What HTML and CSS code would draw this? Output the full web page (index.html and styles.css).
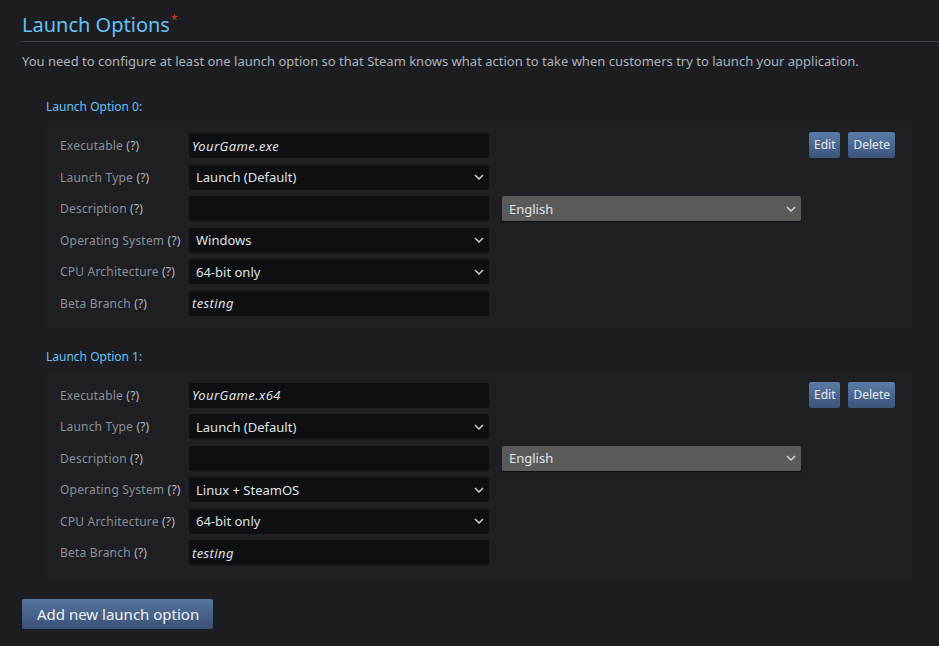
FILE: index.html
```html
<!DOCTYPE html>
<html>
<head>
<meta charset="utf-8">
<link rel="stylesheet" href="styles.css">
</head>
<body>
<div class="page">
  <h2 class="title">Launch Options<span class="req">*</span></h2>
  <p class="intro">You need to configure at least one launch option so that Steam knows what action to take when customers try to launch your application.</p>

  <div class="option">
    <div class="option-head">Launch Option 0:</div>
    <div class="panel">
      <div class="row">
        <div class="label">Executable <span class="q">(?)</span></div>
        <div class="field"><span class="it">YourGame.exe</span></div>
        <div class="actions"><span class="btn">Edit</span><span class="btn">Delete</span></div>
      </div>
      <div class="row">
        <div class="label">Launch Type <span class="q">(?)</span></div>
        <div class="field sel"><span>Launch (Default)</span><svg class="chev" width="10" height="6" viewBox="0 0 10 6"><path d="M1 1 L5 5 L9 1" fill="none" stroke="#c9cbcd" stroke-width="1.5"/></svg></div>
      </div>
      <div class="row">
        <div class="label">Description <span class="q">(?)</span></div>
        <div class="field"></div>
        <div class="lang"><span>English</span><svg class="chev" width="10" height="6" viewBox="0 0 10 6"><path d="M1 1 L5 5 L9 1" fill="none" stroke="#d6d6d6" stroke-width="1.5"/></svg></div>
      </div>
      <div class="row">
        <div class="label">Operating System <span class="q">(?)</span></div>
        <div class="field sel"><span>Windows</span><svg class="chev" width="10" height="6" viewBox="0 0 10 6"><path d="M1 1 L5 5 L9 1" fill="none" stroke="#c9cbcd" stroke-width="1.5"/></svg></div>
      </div>
      <div class="row">
        <div class="label">CPU Architecture <span class="q">(?)</span></div>
        <div class="field sel"><span>64-bit only</span><svg class="chev" width="10" height="6" viewBox="0 0 10 6"><path d="M1 1 L5 5 L9 1" fill="none" stroke="#c9cbcd" stroke-width="1.5"/></svg></div>
      </div>
      <div class="row">
        <div class="label">Beta Branch <span class="q">(?)</span></div>
        <div class="field"><span class="it">testing</span></div>
      </div>
    </div>
  </div>

  <div class="option">
    <div class="option-head">Launch Option 1:</div>
    <div class="panel">
      <div class="row">
        <div class="label">Executable <span class="q">(?)</span></div>
        <div class="field"><span class="it">YourGame.x64</span></div>
        <div class="actions"><span class="btn">Edit</span><span class="btn">Delete</span></div>
      </div>
      <div class="row">
        <div class="label">Launch Type <span class="q">(?)</span></div>
        <div class="field sel"><span>Launch (Default)</span><svg class="chev" width="10" height="6" viewBox="0 0 10 6"><path d="M1 1 L5 5 L9 1" fill="none" stroke="#c9cbcd" stroke-width="1.5"/></svg></div>
      </div>
      <div class="row">
        <div class="label">Description <span class="q">(?)</span></div>
        <div class="field"></div>
        <div class="lang"><span>English</span><svg class="chev" width="10" height="6" viewBox="0 0 10 6"><path d="M1 1 L5 5 L9 1" fill="none" stroke="#d6d6d6" stroke-width="1.5"/></svg></div>
      </div>
      <div class="row">
        <div class="label">Operating System <span class="q">(?)</span></div>
        <div class="field sel"><span>Linux + SteamOS</span><svg class="chev" width="10" height="6" viewBox="0 0 10 6"><path d="M1 1 L5 5 L9 1" fill="none" stroke="#c9cbcd" stroke-width="1.5"/></svg></div>
      </div>
      <div class="row">
        <div class="label">CPU Architecture <span class="q">(?)</span></div>
        <div class="field sel"><span>64-bit only</span><svg class="chev" width="10" height="6" viewBox="0 0 10 6"><path d="M1 1 L5 5 L9 1" fill="none" stroke="#c9cbcd" stroke-width="1.5"/></svg></div>
      </div>
      <div class="row">
        <div class="label">Beta Branch <span class="q">(?)</span></div>
        <div class="field"><span class="it">testing</span></div>
      </div>
    </div>
  </div>

  <div class="add-wrap"><span class="btn big">Add new launch option</span></div>
</div>
</body>
</html>
```

FILE: styles.css
```css
html, body {
  margin: 0;
  padding: 0;
  background: #1b1d21;
}
body {
  font-family: "Noto Sans", "Open Sans", sans-serif;
  color: #acb2b8;
}
.page {
  padding-left: 22px;
  height: 646px;
  overflow: hidden;
}
.title {
  margin: 0;
  padding-top: 11px;
  padding-bottom: 2px;
  font-size: 20px;
  line-height: 28px;
  font-weight: normal;
  color: #67c1f5;
  border-bottom: 1px solid #3a3d42;
}
.req {
  color: #d9412a;
  font-size: 12px;
  vertical-align: top;
  position: relative;
  top: -5px;
  margin-left: 1px;
}
.intro {
  margin: 10px 0 0 0;
  font-size: 13px;
  line-height: 18px;
  color: #acb2b8;
}
.option {
  margin-top: 29px;
  margin-left: 24px;
  width: 867px;
}
.option + .option {
  margin-top: 19px;
}
.option-head {
  font-size: 12px;
  line-height: 16px;
  color: #67c1f5;
}
.panel {
  margin-top: 6px;
  background: #1d1f23;
  padding: 12px 0 14px 14px;
  display: flex;
  flex-direction: column;
  gap: 6.5px;
}
.row {
  display: grid;
  grid-template-columns: 129px 313px 307px auto;
  align-items: center;
  height: 25px;
}
.label {
  font-size: 12px;
  letter-spacing: 0.2px;
  color: #8a9096;
  white-space: nowrap;
}
.q {
  color: #b4b9be;
}
.field {
  grid-column: 2;
  width: 300px;
  height: 25px;
  box-sizing: border-box;
  background: #0e0f12;
  border-radius: 3px;
  display: flex;
  align-items: center;
  justify-content: space-between;
  padding: 0 3px 0 3px;
  font-size: 13px;
  color: #dfe1e2;
}
.field.sel {
  padding: 0 5px 0 7px;
}
.it {
  font-style: italic;
  letter-spacing: 0.4px;
}
.chev {
  display: block;
}
.lang {
  grid-column: 3;
  width: 299px;
  height: 25px;
  box-sizing: border-box;
  background: #5a5a5a;
  border-radius: 2px;
  box-shadow: 0 1px 1px rgba(0,0,0,0.55);
  display: flex;
  align-items: center;
  justify-content: space-between;
  padding: 0 5px 0 7px;
  font-size: 13px;
  color: #e4e4e4;
}
.actions {
  grid-column: 4;
  display: flex;
  gap: 8px;
  margin-top: -1px;
}
.btn {
  display: inline-block;
  height: 26px;
  line-height: 26px;
  padding: 0 5px;
  font-size: 12px;
  color: #e6ecf3;
  background: linear-gradient(to bottom, #5b7ba7 0%, #3c5378 100%);
  border-radius: 2px;
  box-sizing: border-box;
}
.add-wrap {
  margin-top: 20px;
}
.btn.big {
  height: 30px;
  line-height: 30px;
  padding: 0 14px 0 15px;
  font-size: 15px;
  color: #eef2f6;
  background: linear-gradient(to bottom, #56749e 0%, #3b5175 100%);
}
```
